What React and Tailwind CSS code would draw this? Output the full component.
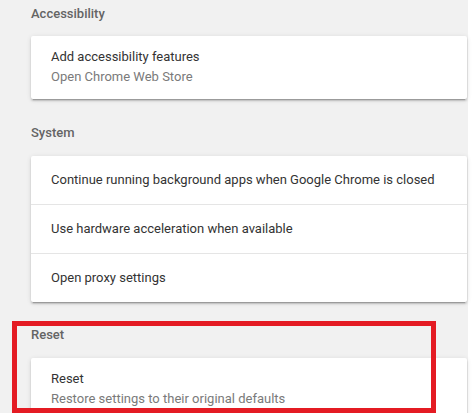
import React from 'react';

const font = { fontFamily: 'Roboto, "Noto Sans", sans-serif' };

const Heading = ({ children, className = '' }) => (
  <div className={`text-[13px] leading-[18px] font-medium text-[#646464] ${className}`}>{children}</div>
);

const Card = ({ children }) => (
  <div className="w-[436px] bg-white rounded-[2px] shadow-[0_2px_2px_0_rgba(0,0,0,0.14),0_1px_5px_0_rgba(0,0,0,0.12),0_3px_1px_-2px_rgba(0,0,0,0.2)]">
    {children}
  </div>
);

const Row = ({ children, last }) => (
  <div className={`flex items-center px-[20px] text-[13px] text-[#333] ${last ? 'h-[48px]' : 'h-[49px] border-b border-[#e5e5e5]'}`}>
    {children}
  </div>
);

export default function App() {
  const systemRows = [
    'Continue running background apps when Google Chrome is closed',
    'Use hardware acceleration when available',
    'Open proxy settings',
  ];

  return (
    <div className="relative w-[475px] h-[413px] bg-white overflow-hidden" style={font}>
      <div className="w-[468px] h-[413px] bg-[#f1f1f1] pl-[31px] pt-[5px]">
        {/* Accessibility */}
        <Heading className="mb-[13px]">Accessibility</Heading>
        <Card>
          <div className="px-[20px] pt-[11px] pb-[12px] text-[13px] leading-[20px]">
            <div className="text-[#333]">Add accessibility features</div>
            <div className="text-[#7a7a7a]">Open Chrome Web Store</div>
          </div>
        </Card>

        {/* System */}
        <Heading className="mt-[25px] mb-[14px]">System</Heading>
        <Card>
          {systemRows.map((label, i) => (
            <Row key={label} last={i === systemRows.length - 1}>{label}</Row>
          ))}
        </Card>

        {/* Reset */}
        <Heading className="mt-[24px] mb-[14px]">Reset</Heading>
        <Card>
          <div className="px-[20px] pt-[11px] pb-[12px] text-[13px] leading-[20px]">
            <div className="text-[#333]">Reset</div>
            <div className="text-[#7a7a7a]">Restore settings to their original defaults</div>
          </div>
        </Card>
      </div>

      {/* annotation box */}
      <div className="absolute left-[12px] top-[321px] w-[424px] h-[92px] border-[5px] border-[#e41b23]" />
    </div>
  );
}
